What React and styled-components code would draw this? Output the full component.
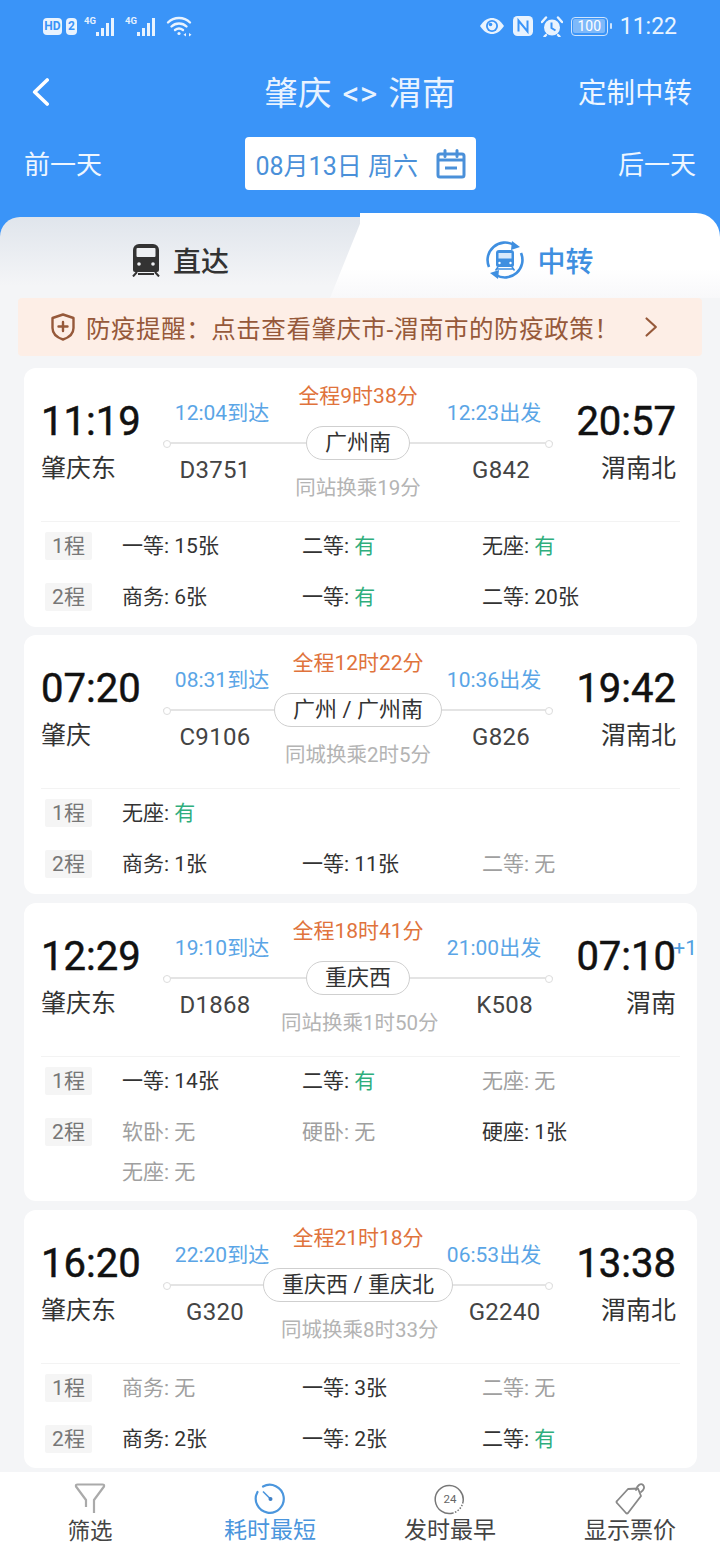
import React from "react";
import styled, { createGlobalStyle } from "styled-components";

const Global = createGlobalStyle`
  html, body { margin: 0; padding: 0; background: #f4f5f7; }
  * { box-sizing: border-box; }
  body { font-family: Roboto, "Noto Sans CJK SC", sans-serif; }
`;

const BLUE = "#3a94f8";

const Page = styled.div`
  width: 720px; height: 1560px; overflow: hidden;
  display: flex; flex-direction: column; background: #f4f5f7;
`;
const Header = styled.header`
  background: ${BLUE}; height: 216px; color: #fff; flex: none;
`;
const StatusBar = styled.div`
  height: 52px; padding: 0 43px; display: flex; justify-content: space-between; align-items: center;
`;
const StatusGroup = styled.div`display: flex; align-items: center; gap: ${p => p.$gap || 8}px;`;
const HdBadge = styled.span`
  height: 17px; width: ${p => p.$w}px; background: #e9f3fe; color: ${BLUE};
  border-radius: 4px; font-size: 12px; font-weight: 700; line-height: 17px; text-align: center;
`;
const BatteryBox = styled.div`
  width: 37px; height: 19px; border: 1.5px solid #cfe4fc; border-radius: 4px; padding: 1.5px;
  display: flex; position: relative; margin-right: 3px;
  &::after { content: ""; position: absolute; right: -5px; top: 5px; width: 2px; height: 6px; background: #cfe4fc; border-radius: 1px; }
`;
const BatteryFill = styled.span`
  flex: 1; background: rgba(255,255,255,.35); border-radius: 2px; color: #fff;
  font-size: 14px; line-height: 14px; text-align: center;
`;
const Clock = styled.span`font-size: 23px; color: #eaf4ff; margin-left: 1px;`;

const Nav = styled.div`
  height: 80px; padding: 0 28px; display: grid; grid-template-columns: 1fr auto 1fr; align-items: center;
`;
const Back = styled.div`display: flex; margin-left: 4px;`;
const Title = styled.div`font-size: 33.5px; word-spacing: 2px; letter-spacing: .3px; color: #e9f3ff; white-space: pre; margin-top: -3px;`;
const NavAction = styled.div`font-size: 28.5px; text-align: right; color: #eef6ff; margin-top: -3px;`;
const DateRow = styled.div`
  margin-top: 5px; height: 53px; padding: 0 24px; display: flex; justify-content: space-between; align-items: center;
`;
const DayLink = styled.div`font-size: 26px; color: #eef6ff; margin-top: -3px;`;
const DateBox = styled.div`
  width: 231px; height: 53px; background: #fff; border-radius: 4px; padding: 0 10px 0 11px;
  display: flex; align-items: center; justify-content: space-between;
  color: #4a90d9; font-size: 25px; white-space: pre;
`;

const Tabs = styled.div`
  margin-top: -3px; height: 85px; flex: none; display: flex;
  background: linear-gradient(${BLUE} 30px, #f4f5f7 30px);
`;
const DirectTab = styled.div`
  width: 360px; margin-top: 4px; border-top-left-radius: 20px;
  background: linear-gradient(#e0e5ec, #f4f5f7 85%);
  display: flex; align-items: center; justify-content: center; gap: 12px;
  font-size: 28px; font-weight: 500; color: #333; padding-top: 5px;
`;
const TransferTab = styled.div`
  width: 360px; position: relative; border-top-right-radius: 24px;
  background: linear-gradient(#fff 65%, #f8f8fa);
  display: flex; align-items: center; justify-content: center; gap: 13px;
  font-size: 28px; font-weight: 500; color: #3f8fe0; padding-top: 9px;
  &::before {
    content: ""; position: absolute; left: -30px; top: 0; bottom: 0; width: 50px;
    background: linear-gradient(#fff 65%, #f8f8fa);
    border-top-left-radius: 10px; transform-origin: bottom left; transform: skewX(-22deg);
  }
  & > * { position: relative; }
`;

const Notice = styled.div`
  flex: none; height: 58px; margin: 0 18px; background: #fdeee6; border-radius: 4px;
  display: flex; align-items: center; padding: 0 45px 0 33px; gap: 11px;
  font-size: 24.5px; letter-spacing: .55px; color: #96593a; white-space: nowrap;
`;
const NoticeText = styled.span`flex: 1;`;

const List = styled.main`
  flex: 1; padding: 12px 23px 0 24px; display: flex; flex-direction: column; gap: 8.8px; min-height: 0;
`;
const Card = styled.article`
  background: #fff; border-radius: 12px; padding: 0 0 15.5px 17px; flex: none; overflow: hidden;
`;
const Top = styled.div`
  height: 154px; margin-right: 17px; border-bottom: 1px solid #f3f3f3;
  display: grid; grid-template-columns: 122px 390px 123px;
`;
const Endpoint = styled.div`
  padding-top: 30px; text-align: ${p => p.$right ? "right" : "left"}; position: relative;
`;
const Time = styled.div`font-size: 40px; line-height: 48px; color: #111; -webkit-text-stroke: .5px #111;`;
const Station = styled.div`font-size: 25px; line-height: 30px; margin-top: 8px; color: #333; white-space: nowrap;`;
const NextDay = styled.span`
  position: absolute; right: -21px; top: 32px; font-size: 21px; line-height: 26px; color: #4f9fe0;
`;
const Middle = styled.div`padding-top: 15px;`;
const TimesRow = styled.div`
  height: 43px; display: grid; grid-template-columns: 118px 1fr 118px; font-size: 21px; line-height: 26px;
`;
const Connect = styled.div`align-self: end; text-align: center; color: #5aa5e6; white-space: nowrap;`;
const Duration = styled.div`text-align: center; color: #e0733c; white-space: nowrap;`;
const LineRow = styled.div`height: 34px; display: flex; align-items: center;`;
const Track = styled.div`
  flex: 1; height: 2px; background: #e4e4e4; position: relative;
  &::before {
    content: ""; position: absolute; top: -2px; width: 6px; height: 6px; border-radius: 50%;
    background: #fff; border: 1.5px solid #ddd; ${p => p.$end ? "right: 0;" : "left: 0;"}
  }
`;
const Hub = styled.div`
  height: 34px; padding: 0 18px; border: 1.5px solid #cfcfcf; border-radius: 17px;
  font-size: 22px; line-height: 31px; color: #333; white-space: nowrap;
`;
const TrainRow = styled.div`
  margin-top: -4px; display: grid; grid-template-columns: 118px 1fr 118px;
`;
const TrainNo = styled.div`
  font-size: 24px; line-height: 28px; color: #444; text-align: center; letter-spacing: .3px;
  ${p => p.$end ? "padding-left: 14px;" : "padding-right: 14px;"}
`;
const Change = styled.div`
  margin-top: 20px; font-size: 20.5px; line-height: 24px; color: #b4b4b4; text-align: center; white-space: nowrap;
`;
const Legs = styled.div`padding: 10px 0 0 4px; display: flex; flex-direction: column; gap: 23px;`;
const Leg = styled.div`display: grid; grid-template-columns: 77px 1fr;`;
const LegTag = styled.div`
  width: 47px; height: 28px; background: #f5f5f5; border-radius: 2px; font-size: 21px; line-height: 28px;
  text-align: center; color: #777;
`;
const Seats = styled.div`display: grid; grid-template-columns: repeat(3, 180px); row-gap: 12px;`;
const Seat = styled.div`font-size: 21px; line-height: 28px; white-space: pre; color: ${p => p.$off ? "#a0a0a0" : "#333"};`;
const Avail = styled.span`color: #2fae7d;`;

const BottomBar = styled.nav`
  flex: none; height: 88px; background: #fff; display: grid; grid-template-columns: repeat(4, 180px);
`;
const BarItem = styled.div`
  display: flex; flex-direction: column; align-items: center; padding-top: 11px;
  font-size: ${p => p.$small ? 22.5 : 23}px; line-height: 28px; color: ${p => p.$active ? "#4b96dd" : "#444"};
`;
const BarIcon = styled.svg`display: block; margin-bottom: ${p => p.$mb ?? 0}px;`;

const Signal = () => (
  <svg width="34" height="22" viewBox="0 0 34 22">
    <text x="0" y="9" fontFamily="Roboto" fontWeight="700" fontSize="9.5" fill="#e6f1fe">4G</text>
    <g fill="#e9f3fe">
      <rect x="12" y="17" width="3" height="4" />
      <rect x="17" y="13" width="3" height="8" />
      <rect x="22" y="8" width="3" height="13" />
      <rect x="27" y="3" width="3" height="18" />
    </g>
  </svg>
);
const Wifi = () => (
  <svg width="27" height="22" viewBox="0 0 27 22" fill="none" stroke="#e9f3fe" strokeWidth="2.4" strokeLinecap="round">
    <path d="M2 7.5C8 1.5 18 1.5 24 7.5" />
    <path d="M5.5 11.5C9.5 7.5 16.5 7.5 20.5 11.5" />
    <path d="M9 15C11.5 13 14.5 13 17 15" />
    <circle cx="13" cy="18.5" r="1.6" fill="#e9f3fe" stroke="none" />
    <path d="M20 18l-2.5 1.8 2.5 1.8zM23 18l2.5 1.8-2.5 1.8z" fill="#e9f3fe" stroke="none" />
  </svg>
);
const Eye = () => (
  <svg width="26" height="18" viewBox="0 0 26 18">
    <path d="M1 9C5 3 9 1 13 1s8 2 12 8c-4 6-8 8-12 8S5 15 1 9z" fill="#e9f3fe" />
    <circle cx="13" cy="9" r="6" fill={BLUE} />
    <circle cx="13" cy="9" r="4.2" fill="#e9f3fe" />
    <circle cx="11.5" cy="7.5" r="1.8" fill={BLUE} />
  </svg>
);
const Nfc = () => (
  <svg width="20" height="20" viewBox="0 0 20 20">
    <rect width="20" height="20" rx="4.5" fill="#e9f3fe" />
    <path d="M5.5 15.5V4.5L14.5 15.5V4.5" fill="none" stroke={BLUE} strokeWidth="2" />
  </svg>
);
const Alarm = () => (
  <svg width="22" height="21" viewBox="0 0 22 21">
    <circle cx="11" cy="11.5" r="8" fill="#e9f3fe" />
    <path d="M1 6l4-4.5M21 6l-4-4.5M5 19l-1.5 1.5M17 19l1.5 1.5" stroke="#e9f3fe" strokeWidth="2.4" strokeLinecap="round" />
    <path d="M10.5 6.5v5.5l4 2.5" fill="none" stroke={BLUE} strokeWidth="2" />
  </svg>
);
const Chevron = ({ left, size = 28, color = "#fff", w = 3.6 }) => (
  <svg width={size * 0.62} height={size} viewBox="0 0 17 28" fill="none" stroke={color} strokeWidth={w} strokeLinecap="round" strokeLinejoin="round">
    <path d={left ? "M15 2L2.5 14 15 26" : "M2 2l13 12L2 26"} />
  </svg>
);
const Calendar = () => (
  <svg width="30" height="30" viewBox="0 0 30 30" fill="none" stroke="#4a90d9">
    <rect x="2" y="5" width="26" height="23" rx="2" strokeWidth="3" />
    <path d="M2 11h26" strokeWidth="3" />
    <path d="M9 1.5v6M21 1.5v6" stroke="#4a90d9" strokeWidth="3" strokeLinecap="round" />
    <path d="M9 19h12" strokeWidth="3" />
  </svg>
);
const TrainIcon = () => (
  <svg width="30" height="34" viewBox="0 0 30 34">
    <path d="M8 1h14a6 6 0 0 1 6 6v20a2 2 0 0 1-2 2H4a2 2 0 0 1-2-2V7a6 6 0 0 1 6-6z" fill="#333" />
    <rect x="5.5" y="5" width="19" height="9" rx="1" fill="#eef0f3" />
    <circle cx="8" cy="21" r="1.8" fill="#eef0f3" />
    <circle cx="22" cy="21" r="1.8" fill="#eef0f3" />
    <path d="M6 29l-4 4.5M24 29l4 4.5M7 31h16" stroke="#333" strokeWidth="2" fill="none" />
  </svg>
);
const TransferIcon = () => (
  <svg width="38" height="38" viewBox="0 0 38 38">
    <g fill="none" stroke="#3f8fe0" strokeWidth="2.6">
      <path d="M3 26A17.5 17.5 0 0 1 28 4" />
      <path d="M35 12A17.5 17.5 0 0 1 10 34" />
    </g>
    <path d="M26 0l8 6-9 3zM12 38l-8-6 9-3z" fill="#3f8fe0" />
    <path d="M13 9h12a3 3 0 0 1 3 3v12a2 2 0 0 1-2 2H12a2 2 0 0 1-2-2V12a3 3 0 0 1 3-3z" fill="#3f8fe0" />
    <rect x="12.5" y="12" width="13" height="5.5" fill="#d8e9fb" />
    <circle cx="13.5" cy="22" r="1.2" fill="#fff" />
    <circle cx="24.5" cy="22" r="1.2" fill="#fff" />
    <path d="M12 26l-2.5 3.5M26 26l2.5 3.5M11 28h16" stroke="#3f8fe0" strokeWidth="1.6" />
  </svg>
);
const Shield = () => (
  <svg width="24" height="28" viewBox="0 0 24 28" fill="none" stroke="#96593a" strokeWidth="2.4">
    <path d="M12 1.5L22.5 5v10c0 5.500-4.500 9.500-10.500 11.500C6 24.500 1.500 20.500 1.500 15V5z" strokeLinejoin="round" />
    <path d="M12 9v9M7.500 13.500h9" strokeLinecap="round" />
  </svg>
);

const Row = ({ tag, items }) => (
  <Leg>
    <LegTag>{tag}</LegTag>
    <Seats>
      {items.map(([name, val, kind], i) => (
        <Seat key={i} $off={kind === "off"}>
          {name}: {kind === "yes" ? <Avail>{val}</Avail> : val}
        </Seat>
      ))}
    </Seats>
  </Leg>
);

const Y = (n) => [n, "有", "yes"];
const N = (n) => [n, "无", "off"];
const T = (n, v) => [n, v, ""];

const trips = [
  { a: "11:19", from: "肇庆东", arr: "12:04到达", total: "全程9时38分", dep: "12:23出发", hub: "广州南", t1: "D3751", t2: "G842", change: "同站换乘19分", b: "20:57", to: "渭南北",
    legs: [[T("一等", "15张"), Y("二等"), Y("无座")], [T("商务", "6张"), Y("一等"), T("二等", "20张")]] },
  { a: "07:20", from: "肇庆", arr: "08:31到达", total: "全程12时22分", dep: "10:36出发", hub: "广州 / 广州南", t1: "C9106", t2: "G826", change: "同城换乘2时5分", b: "19:42", to: "渭南北",
    legs: [[Y("无座")], [T("商务", "1张"), T("一等", "11张"), N("二等")]] },
  { a: "12:29", from: "肇庆东", arr: "19:10到达", total: "全程18时41分", dep: "21:00出发", hub: "重庆西", t1: "D1868", t2: "K508", change: "同站换乘1时50分", b: "07:10", to: "渭南", plus: "+1",
    legs: [[T("一等", "14张"), Y("二等"), N("无座")], [N("软卧"), N("硬卧"), T("硬座", "1张"), N("无座")]] },
  { a: "16:20", from: "肇庆东", arr: "22:20到达", total: "全程21时18分", dep: "06:53出发", hub: "重庆西 / 重庆北", t1: "G320", t2: "G2240", change: "同城换乘8时33分", b: "13:38", to: "渭南北",
    legs: [[N("商务"), T("一等", "3张"), N("二等")], [T("商务", "2张"), T("一等", "2张"), Y("二等")]] },
];

const Trip = ({ t }) => (
  <Card>
    <Top>
      <Endpoint>
        <Time>{t.a}</Time>
        <Station>{t.from}</Station>
      </Endpoint>
      <Middle>
        <TimesRow>
          <Connect>{t.arr}</Connect>
          <Duration>{t.total}</Duration>
          <Connect>{t.dep}</Connect>
        </TimesRow>
        <LineRow>
          <Track />
          <Hub>{t.hub}</Hub>
          <Track $end />
        </LineRow>
        <TrainRow>
          <TrainNo>{t.t1}</TrainNo>
          <Change>{t.change}</Change>
          <TrainNo $end>{t.t2}</TrainNo>
        </TrainRow>
      </Middle>
      <Endpoint $right>
        <Time>{t.b}</Time>
        <Station>{t.to}</Station>
        {t.plus && <NextDay>{t.plus}</NextDay>}
      </Endpoint>
    </Top>
    <Legs>
      {t.legs.map((items, i) => <Row key={i} tag={`${i + 1}程`} items={items} />)}
    </Legs>
  </Card>
);

export default function App() {
  return (
    <Page>
      <Global />
      <Header>
        <StatusBar>
          <StatusGroup $gap={7}>
            <StatusGroup $gap={4}>
              <HdBadge $w={19}>HD</HdBadge>
              <HdBadge $w={11}>2</HdBadge>
            </StatusGroup>
            <Signal />
            <Signal />
            <Wifi />
          </StatusGroup>
          <StatusGroup $gap={8}>
            <Eye />
            <Nfc />
            <Alarm />
            <BatteryBox><BatteryFill>100</BatteryFill></BatteryBox>
            <Clock>11:22</Clock>
          </StatusGroup>
        </StatusBar>
        <Nav>
          <Back><Chevron left /></Back>
          <Title>肇庆 {"<>"} 渭南</Title>
          <NavAction>定制中转</NavAction>
        </Nav>
        <DateRow>
          <DayLink>前一天</DayLink>
          <DateBox>
            <span>08月13日 周六</span>
            <Calendar />
          </DateBox>
          <DayLink>后一天</DayLink>
        </DateRow>
      </Header>
      <Tabs>
        <DirectTab><TrainIcon />直达</DirectTab>
        <TransferTab><TransferIcon /><span>中转</span></TransferTab>
      </Tabs>
      <Notice>
        <Shield />
        <NoticeText>防疫提醒：点击查看肇庆市-渭南市的防疫政策！</NoticeText>
        <Chevron size={20} color="#96593a" w={3} />
      </Notice>
      <List>
        {trips.map((t, i) => <Trip key={i} t={t} />)}
      </List>
      <BottomBar>
        <BarItem $small>
          <BarIcon width="32" height="31" viewBox="0 0 32 31" fill="none" stroke="#aaa" strokeWidth="2.2" strokeLinejoin="round" $mb={3}>
            <path d="M12 24V17L2 3.500Q1.500 1.500 3.500 1.500H28.500Q30.500 1.500 30 3.500L20 17V30" />
          </BarIcon>
          筛选
        </BarItem>
        <BarItem $active>
          <BarIcon width="32" height="32" viewBox="0 0 32 32" fill="none" stroke="#4b96dd" strokeWidth="2.2" $mb={2}>
            <path d="M9 3.500A14 14 0 1 1 3.500 9" strokeLinecap="round" />
            <path d="M9 8.500L17 16.500" strokeWidth="1.600" />
            <circle cx="16.500" cy="16" r="2" fill="#3f7fc4" stroke="none" />
          </BarIcon>
          耗时最短
        </BarItem>
        <BarItem>
          <BarIcon width="32" height="32" viewBox="0 0 32 32" fill="none" stroke="#777" strokeWidth="1.500" $mb={2}>
            <path d="M29 19A14 14 0 1 0 19 30" />
            <path d="M29 19A14 14 0 0 1 19 30" strokeDasharray="1.500 1.500" />
            <text x="16" y="20" textAnchor="middle" fontFamily="Roboto" fontSize="11.500" fill="#666" stroke="none">24</text>
          </BarIcon>
          发时最早
        </BarItem>
        <BarItem>
          <BarIcon width="32" height="32" viewBox="0 0 32 32" fill="none" stroke="#888" strokeWidth="1.800" strokeLinejoin="round" $mb={2}>
            <path d="M14 6L24 5.500L27 13L14 30Q13 31 12 30L3 20Q2 19 3 18z" />
            <path d="M22 7c1-5 5-7 7-5s1 5-2 7" strokeLinecap="round" />
          </BarIcon>
          显示票价
        </BarItem>
      </BottomBar>
    </Page>
  );
}
